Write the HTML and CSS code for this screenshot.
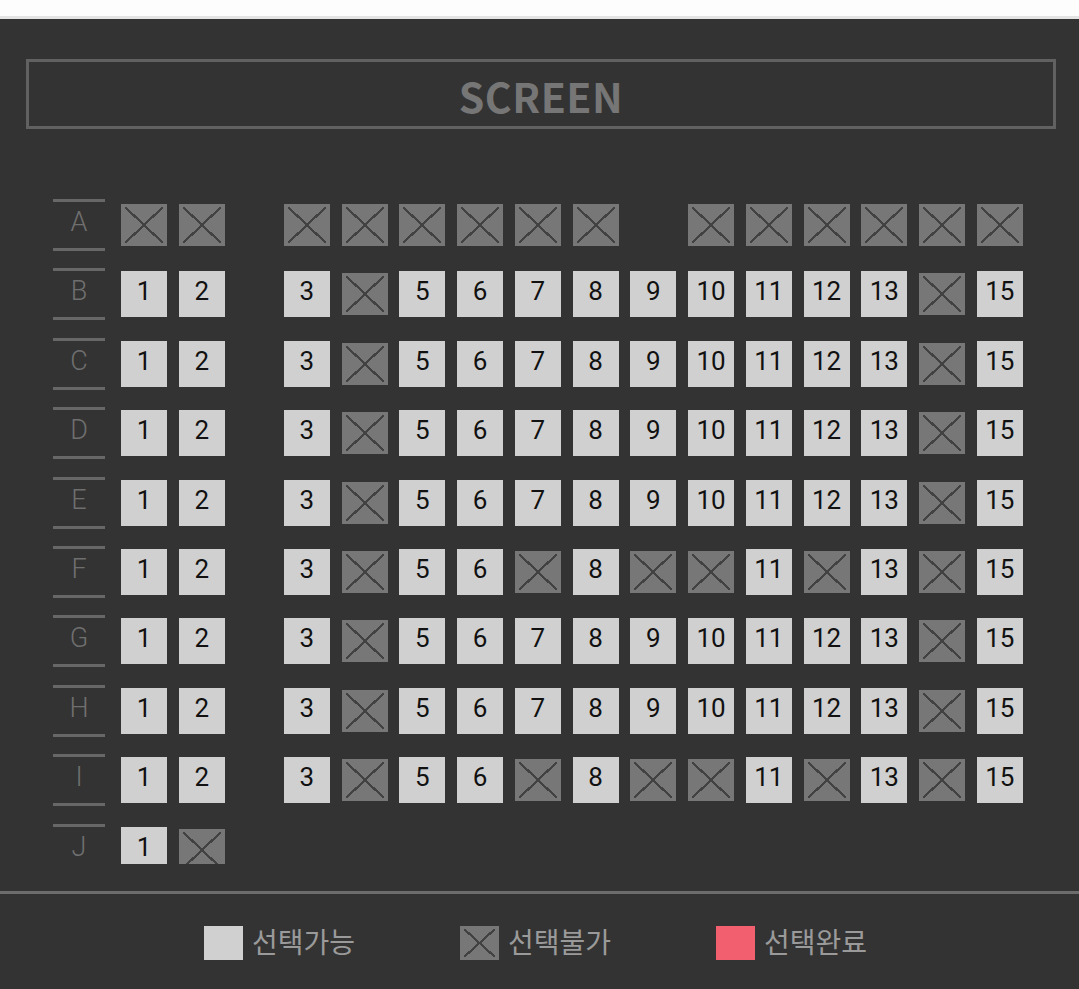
FILE: index.html
```html
<!DOCTYPE html>
<html lang="ko">
<head>
<meta charset="utf-8">
<title>좌석 선택</title>
<link rel="stylesheet" href="styles.css">
</head>
<body>
<div class="top"></div>
<main class="panel">
  <div class="screen-wrap"><div class="screen">SCREEN</div></div>
  <div class="seatmap">
    <div class="row"><div class="label">A</div><div class="seats">
      <span class="seat off"></span><span class="seat off aisle"></span>
      <span class="seat off"></span><span class="seat off"></span><span class="seat off"></span><span class="seat off"></span><span class="seat off"></span><span class="seat off"></span>
      <span class="seat empty"></span>
      <span class="seat off"></span><span class="seat off"></span><span class="seat off"></span><span class="seat off"></span><span class="seat off"></span><span class="seat off"></span>
    </div></div>
    <div class="row"><div class="label">B</div><div class="seats">
      <span class="seat">1</span><span class="seat aisle">2</span><span class="seat">3</span><span class="seat off"></span><span class="seat">5</span><span class="seat">6</span><span class="seat">7</span><span class="seat">8</span><span class="seat">9</span><span class="seat">10</span><span class="seat">11</span><span class="seat">12</span><span class="seat">13</span><span class="seat off"></span><span class="seat">15</span>
    </div></div>
    <div class="row"><div class="label">C</div><div class="seats">
      <span class="seat">1</span><span class="seat aisle">2</span><span class="seat">3</span><span class="seat off"></span><span class="seat">5</span><span class="seat">6</span><span class="seat">7</span><span class="seat">8</span><span class="seat">9</span><span class="seat">10</span><span class="seat">11</span><span class="seat">12</span><span class="seat">13</span><span class="seat off"></span><span class="seat">15</span>
    </div></div>
    <div class="row"><div class="label">D</div><div class="seats">
      <span class="seat">1</span><span class="seat aisle">2</span><span class="seat">3</span><span class="seat off"></span><span class="seat">5</span><span class="seat">6</span><span class="seat">7</span><span class="seat">8</span><span class="seat">9</span><span class="seat">10</span><span class="seat">11</span><span class="seat">12</span><span class="seat">13</span><span class="seat off"></span><span class="seat">15</span>
    </div></div>
    <div class="row"><div class="label">E</div><div class="seats">
      <span class="seat">1</span><span class="seat aisle">2</span><span class="seat">3</span><span class="seat off"></span><span class="seat">5</span><span class="seat">6</span><span class="seat">7</span><span class="seat">8</span><span class="seat">9</span><span class="seat">10</span><span class="seat">11</span><span class="seat">12</span><span class="seat">13</span><span class="seat off"></span><span class="seat">15</span>
    </div></div>
    <div class="row"><div class="label">F</div><div class="seats">
      <span class="seat">1</span><span class="seat aisle">2</span><span class="seat">3</span><span class="seat off"></span><span class="seat">5</span><span class="seat">6</span><span class="seat off"></span><span class="seat">8</span><span class="seat off"></span><span class="seat off"></span><span class="seat">11</span><span class="seat off"></span><span class="seat">13</span><span class="seat off"></span><span class="seat">15</span>
    </div></div>
    <div class="row"><div class="label">G</div><div class="seats">
      <span class="seat">1</span><span class="seat aisle">2</span><span class="seat">3</span><span class="seat off"></span><span class="seat">5</span><span class="seat">6</span><span class="seat">7</span><span class="seat">8</span><span class="seat">9</span><span class="seat">10</span><span class="seat">11</span><span class="seat">12</span><span class="seat">13</span><span class="seat off"></span><span class="seat">15</span>
    </div></div>
    <div class="row"><div class="label">H</div><div class="seats">
      <span class="seat">1</span><span class="seat aisle">2</span><span class="seat">3</span><span class="seat off"></span><span class="seat">5</span><span class="seat">6</span><span class="seat">7</span><span class="seat">8</span><span class="seat">9</span><span class="seat">10</span><span class="seat">11</span><span class="seat">12</span><span class="seat">13</span><span class="seat off"></span><span class="seat">15</span>
    </div></div>
    <div class="row"><div class="label">I</div><div class="seats">
      <span class="seat">1</span><span class="seat aisle">2</span><span class="seat">3</span><span class="seat off"></span><span class="seat">5</span><span class="seat">6</span><span class="seat off"></span><span class="seat">8</span><span class="seat off"></span><span class="seat off"></span><span class="seat">11</span><span class="seat off"></span><span class="seat">13</span><span class="seat off"></span><span class="seat">15</span>
    </div></div>
    <div class="row"><div class="label">J</div><div class="seats">
      <span class="seat">1</span><span class="seat off aisle"></span>
    </div></div>
  </div>
  <div class="legend">
    <div class="legend-item"><span class="swatch avail"></span><span class="legend-text">선택가능</span></div>
    <div class="legend-item"><span class="swatch off"></span><span class="legend-text">선택불가</span></div>
    <div class="legend-item"><span class="swatch done"></span><span class="legend-text">선택완료</span></div>
  </div>
</main>
</body>
</html>
```

FILE: styles.css
```css
html, body {
  margin: 0;
  padding: 0;
  background: #333333;
}

body {
  width: 1079px;
  height: 989px;
  overflow: hidden;
  font-family: Roboto, "Noto Sans CJK KR", sans-serif;
}

.top {
  height: 16px;
  background: #fdfdfd;
  border-bottom: 3px solid #e4e4e4;
}

.panel {
  background: #333333;
  height: 970px;
}

.screen-wrap {
  padding: 40px 23px 0 26px;
}

.screen {
  box-sizing: border-box;
  height: 70px;
  border: 3px solid #616161;
  color: #767676;
  font-family: "Noto Sans CJK KR", "Noto Sans", sans-serif;
  font-weight: 700;
  font-size: 41px;
  line-height: 67px;
  text-align: center;
  letter-spacing: 0.5px;
}

.seatmap {
  margin: 70px 0 27px 0;
  padding-left: 53px;
  height: 665px;
  overflow: hidden;
  display: flex;
  flex-direction: column;
  gap: 17.4px;
}

.row {
  display: flex;
  align-items: center;
  height: 52px;
  flex: none;
}

.label {
  box-sizing: border-box;
  width: 52px;
  height: 52px;
  border-top: 3px solid #676767;
  border-bottom: 3px solid #676767;
  color: #6f6f6f;
  font-family: Roboto, sans-serif;
  font-weight: 300;
  font-size: 27px;
  line-height: 40px;
  text-align: center;
  margin-right: 16px;
}

.seats {
  display: flex;
  align-items: center;
  gap: 11.75px;
}

.seat {
  box-sizing: border-box;
  width: 46px;
  height: 46px;
  background: #d0d0d0;
  color: #111111;
  font-family: Roboto, sans-serif;
  font-size: 26px;
  line-height: 40px;
  text-align: center;
  flex: none;
}

.seat.aisle {
  margin-right: 47.25px;
}

.seat.empty {
  background: transparent;
}

.seat.off,
.swatch.off {
  background-color: #777777;
  background-image:
    linear-gradient(to top right, transparent calc(50% - 1.1px), #424242 calc(50% - 1.1px), #424242 calc(50% + 1.1px), transparent calc(50% + 1.1px)),
    linear-gradient(to bottom right, transparent calc(50% - 1.1px), #424242 calc(50% - 1.1px), #424242 calc(50% + 1.1px), transparent calc(50% + 1.1px));
  background-size: calc(100% - 8px) calc(100% - 6px);
  background-position: center;
  background-repeat: no-repeat;
}

.seat.off {
  height: 42px;
}

.legend {
  border-top: 3px solid #6c6c6c;
  display: flex;
  justify-content: center;
  gap: 105px;
  padding-top: 32px;
  padding-right: 8px;
}

.legend-item {
  display: flex;
  align-items: center;
  height: 34px;
}

.swatch {
  width: 39px;
  height: 34px;
  flex: none;
}

.swatch.avail {
  background: #d0d0d0;
}

.swatch.done {
  background: #f2606f;
}

.legend-text {
  margin-left: 9px;
  color: #9a9a9a;
  font-family: "Noto Sans CJK KR", sans-serif;
  font-size: 28px;
  line-height: 32px;
  margin-top: -4px;
}
```
